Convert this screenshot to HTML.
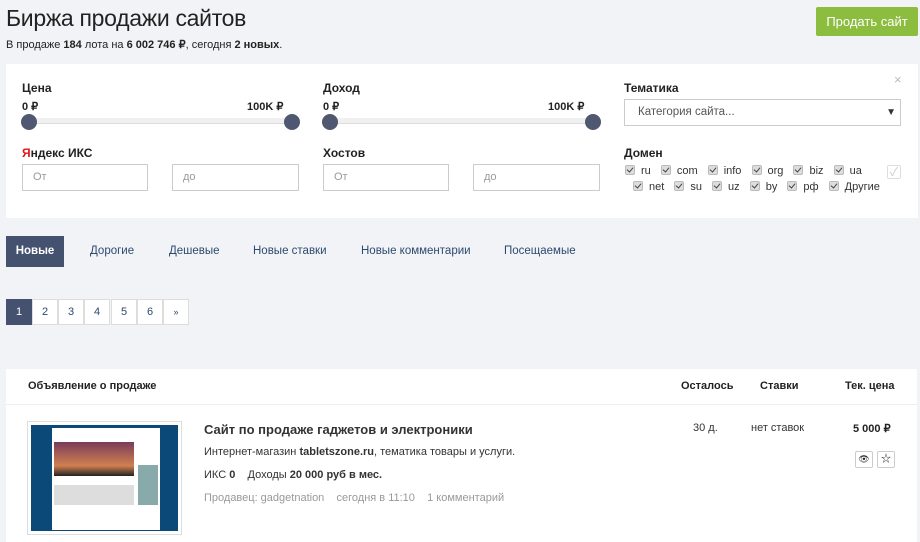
<!DOCTYPE html>
<html><head><meta charset="utf-8"><style>
*{box-sizing:border-box;margin:0;padding:0}
body{width:920px;height:542px;overflow:hidden;background:#f2f3f7;font-family:"Liberation Sans","Noto Sans CJK SC",sans-serif;color:#222;font-size:12px;position:relative}
.a{position:absolute}
h1{position:absolute;left:6px;top:5px;font-size:23px;font-weight:normal;color:#222;letter-spacing:-0.3px}
.sub{left:6px;top:38px;font-size:11px}
.btn{left:816px;top:7px;width:102px;height:29px;background:#8cbd3e;color:#fff;font-size:13px;text-align:center;line-height:29px;border-radius:2px}
.panel{background:#fff}
.lbl{font-weight:bold;font-size:12px;color:#222}
.track{height:6px;background:#f0f0f0;border-bottom:1px solid #ddd}
.knob{width:16px;height:16px;border-radius:50%;background:#4f5870}
.inp{height:27px;border:1px solid #ccc;color:#999;font-size:11px;padding-left:10px;line-height:25px}
.cb{display:inline-block;width:10px;height:10px;background:#ddd;border:1px solid #bbb;border-radius:2px;vertical-align:-1px;margin-right:6px;position:relative}
.cb:after{content:"";position:absolute;left:2px;top:0px;width:3px;height:5px;border:solid #444;border-width:0 1.5px 1.5px 0;transform:rotate(40deg)}
.dom{font-size:11px;color:#333}
.dom span.i{margin-right:7px}
.tab{top:236px;height:31px;line-height:31px;font-size:11.5px;color:#2c4a6e}
.pg{top:299px;width:26px;height:26px;background:#fff;border:1px solid #ddd;text-align:center;line-height:24px;font-size:11px;color:#2c4a6e}
</style></head><body>
<h1>Биржа продажи сайтов</h1>
<div class="a sub">В продаже <b>184</b> лота на <b>6 002 746 ₽</b>, сегодня <b>2 новых</b>.</div>
<div class="a btn">Продать сайт</div>

<div class="a panel" style="left:6px;top:64px;width:912px;height:154px"></div>
<div class="a" style="left:894px;top:72px;color:#bbb;font-size:13px">×</div>
<div class="a lbl" style="left:22px;top:81px">Цена</div>
<div class="a lbl" style="left:22px;top:100px;font-size:11px">0 ₽</div>
<div class="a lbl" style="left:247px;top:100px;font-size:11px">100K ₽</div>
<div class="a track" style="left:28px;top:118px;width:264px"></div>
<div class="a knob" style="left:21px;top:114px"></div>
<div class="a knob" style="left:284px;top:114px"></div>
<div class="a lbl" style="left:323px;top:81px">Доход</div>
<div class="a lbl" style="left:323px;top:100px;font-size:11px">0 ₽</div>
<div class="a lbl" style="left:548px;top:100px;font-size:11px">100K ₽</div>
<div class="a track" style="left:330px;top:118px;width:264px"></div>
<div class="a knob" style="left:322px;top:114px"></div>
<div class="a knob" style="left:585px;top:114px"></div>
<div class="a lbl" style="left:22px;top:146px"><span style="color:#e3131b">Я</span>ндекс ИКС</div>
<div class="a inp" style="left:22px;top:164px;width:126px">От</div>
<div class="a inp" style="left:172px;top:164px;width:127px">до</div>
<div class="a lbl" style="left:323px;top:146px">Хостов</div>
<div class="a inp" style="left:323px;top:164px;width:126px">От</div>
<div class="a inp" style="left:473px;top:164px;width:127px">до</div>
<div class="a lbl" style="left:624px;top:81px">Тематика</div>
<div class="a inp" style="left:624px;top:99px;width:277px;color:#555;font-size:11.5px;padding-left:13px">Категория сайта...<span style="position:absolute;right:4px;top:0;color:#333;font-size:10px">▼</span></div>
<div class="a lbl" style="left:624px;top:146px">Домен</div>
<div class="a dom" style="left:625px;top:165px;white-space:nowrap"><span class="cb"></span><span class="i">ru</span> <span class="cb"></span><span class="i">com</span> <span class="cb"></span><span class="i">info</span> <span class="cb"></span><span class="i">org</span> <span class="cb"></span><span class="i">biz</span> <span class="cb"></span><span class="i">ua</span></div>
<div class="a" style="left:887px;top:165px;width:14px;height:14px;border:1px solid #ddd;border-radius:2px;color:#ccc;font-size:12px;line-height:12px;text-align:center">✓</div>
<div class="a dom" style="left:633px;top:181px;white-space:nowrap"><span class="cb"></span><span class="i">net</span> <span class="cb"></span><span class="i">su</span> <span class="cb"></span><span class="i">uz</span> <span class="cb"></span><span class="i">by</span> <span class="cb"></span><span class="i">рф</span> <span class="cb"></span><span class="i">Другие</span></div>

<div class="a tab" style="left:6px;width:58px;background:#445270;color:#fff;font-weight:bold;text-align:center">Новые</div>
<div class="a tab" style="left:90px">Дорогие</div>
<div class="a tab" style="left:169px">Дешевые</div>
<div class="a tab" style="left:253px">Новые ставки</div>
<div class="a tab" style="left:361px">Новые комментарии</div>
<div class="a tab" style="left:504px">Посещаемые</div>

<div class="a pg" style="left:6px;background:#445270;color:#fff;border-color:#445270">1</div>
<div class="a pg" style="left:32px">2</div>
<div class="a pg" style="left:58px">3</div>
<div class="a pg" style="left:84px">4</div>
<div class="a pg" style="left:111px">5</div>
<div class="a pg" style="left:137px">6</div>
<div class="a pg" style="left:163px;font-size:9px">»</div>

<div class="a panel" style="left:6px;top:369px;width:911px;height:173px"></div>
<div class="a" style="left:6px;top:404px;width:911px;height:1px;background:#eee"></div>
<div class="a lbl" style="left:28px;top:380px;font-size:11px">Объявление о продаже</div>
<div class="a lbl" style="left:681px;top:380px;font-size:11px">Осталось</div>
<div class="a lbl" style="left:760px;top:380px;font-size:11px">Ставки</div>
<div class="a lbl" style="left:845px;top:380px;font-size:11px">Тек. цена</div>

<div class="a" style="left:27px;top:421px;width:155px;height:114px;border:1px solid #ddd;padding:3px;background:#fff">
 <div style="width:100%;height:100%;background:#0b4a78;position:relative">
  <div style="position:absolute;left:21px;top:3px;width:108px;height:102px;background:#fff"></div>
  <div style="position:absolute;left:23px;top:17px;width:80px;height:34px;background:linear-gradient(#7a3c5a,#d08050 70%,#222)"></div>
  <div style="position:absolute;left:23px;top:60px;width:80px;height:20px;background:#ddd"></div>
  <div style="position:absolute;left:107px;top:40px;width:20px;height:40px;background:#8aa"></div>
 </div>
</div>
<div class="a" style="left:204px;top:422px;font-size:13px;font-weight:bold;color:#333">Сайт по продаже гаджетов и электроники</div>
<div class="a" style="left:204px;top:446px;font-size:11px;color:#333">Интернет-магазин <b>tabletszone.ru</b>, тематика товары и услуги.</div>
<div class="a" style="left:204px;top:469px;font-size:11px;color:#333">ИКС <b>0</b> &nbsp;&nbsp; Доходы <b>20 000 руб в мес.</b></div>
<div class="a" style="left:204px;top:492px;font-size:11px;color:#999">Продавец: gadgetnation &nbsp;&nbsp; сегодня в 11:10 &nbsp;&nbsp; 1 комментарий</div>
<div class="a" style="left:693px;top:422px;font-size:11px;color:#333">30 д.</div>
<div class="a" style="left:751px;top:422px;font-size:11px;color:#333">нет ставок</div>
<div class="a" style="left:853px;top:422px;font-size:11px;font-weight:bold;color:#222">5 000 ₽</div>
<div class="a" style="left:855px;top:451px;width:18px;height:17px;border:1px solid #ccc;border-radius:2px;font-size:9px;text-align:center;line-height:15px">👁</div>
<div class="a" style="left:877px;top:451px;width:18px;height:17px;border:1px solid #ccc;border-radius:2px;font-size:10px;text-align:center;line-height:15px">☆</div>
</body></html>
